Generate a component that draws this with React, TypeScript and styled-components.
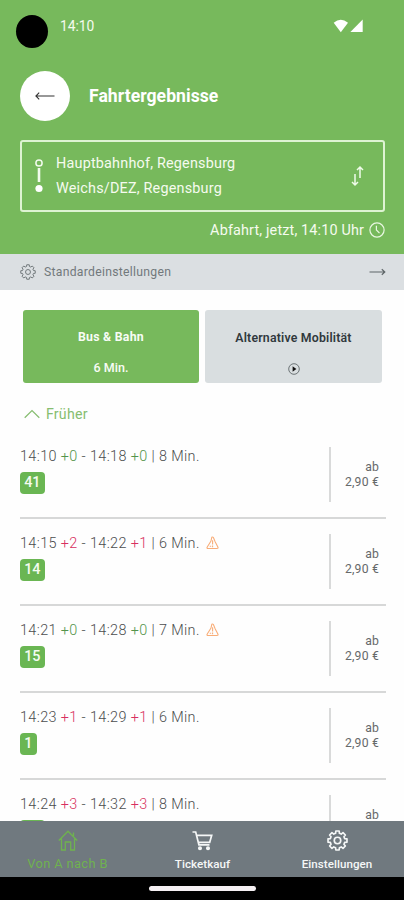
import React from 'react';
import styled, { createGlobalStyle } from 'styled-components';

const GREEN = '#77b95c';

const GlobalStyle = createGlobalStyle`
  * { box-sizing: border-box; }
  body { margin: 0; background: #fefefe; font-family: Roboto, "Liberation Sans", sans-serif; }
  svg { display: block; flex: none; }
`;

const Screen = styled.div`
  width: 404px;
  height: 900px;
  display: flex;
  flex-direction: column;
  overflow: hidden;
  background: #fefefe;
`;

const Header = styled.header`
  flex: none;
  height: 254px;
  padding: 15px 19px 0 20px;
  background: ${GREEN};
  color: #f5fbef;
`;

const StatusBar = styled.div`
  display: flex;
  height: 33px;
  margin-left: -4px;
  padding-right: 22px;
`;

const Camera = styled.div`
  width: 32px;
  height: 33px;
  border-radius: 50%;
  background: #000;
`;

const Clock = styled.span`
  flex: 1;
  margin: 2px 0 0 12px;
  font-size: 13.8px;
  line-height: 18px;
`;

const Signals = styled.div`
  display: flex;
  gap: 1px;
  padding-top: 4px;
`;

const TitleRow = styled.div`
  display: flex;
  align-items: center;
  gap: 19px;
  margin-top: 23px;
  height: 50px;
`;

const BackButton = styled.button`
  display: flex;
  align-items: center;
  justify-content: center;
  width: 50px;
  height: 50px;
  padding: 0;
  border: 0;
  border-radius: 50%;
  background: #fff;
`;

const Title = styled.h1`
  margin: 0;
  font-size: 17.6px;
  font-weight: 700;
  line-height: 24px;
  letter-spacing: 0.04px;
  color: #fff;
`;

const RouteBox = styled.div`
  display: flex;
  align-items: center;
  height: 72px;
  margin-top: 18.5px;
  padding: 0 19px 0 13px;
  border: 2px solid #def3d3;
  border-radius: 3px;
`;

const Stops = styled.div`
  flex: 1;
  margin: 1px 0 0 13px;
  font-size: 14.4px;
  line-height: 25.5px;
  letter-spacing: 0.2px;
`;

const Departure = styled.div`
  display: flex;
  justify-content: flex-end;
  align-items: center;
  gap: 5px;
  height: 20px;
  margin-top: 8.5px;
  font-size: 14.4px;
  letter-spacing: 0.15px;
`;

const SettingsBar = styled.div`
  flex: none;
  display: flex;
  align-items: center;
  height: 36px;
  padding: 0 18px 0 20px;
  background: #dbdfe2;
  color: #72797c;
`;

const SettingsLabel = styled.span`
  flex: 1;
  margin-left: 8px;
  font-size: 12.2px;
  letter-spacing: 0.28px;
`;

const Tabs = styled.div`
  flex: none;
  display: grid;
  grid-template-columns: 176px 177px;
  gap: 6px;
  margin: 20px 0 0 23px;
`;

const Tab = styled.button<{ $active?: boolean }>`
  display: flex;
  flex-direction: column;
  align-items: center;
  height: 73px;
  padding: ${p => (p.$active ? '19px' : '20px')} 0 0;
  border: 0;
  border-radius: 3px;
  background: ${p => (p.$active ? GREEN : '#d9dee0')};
  color: ${p => (p.$active ? '#f8fcf5' : '#30383c')};
  font: 400 12.5px/16px Roboto, sans-serif;
`;

const TabTitle = styled.span<{ $strong?: boolean }>`
  margin-bottom: ${p => (p.$strong ? '15px' : '17px')};
  font-weight: ${p => (p.$strong ? 700 : 600)};
  font-size: 12.3px;
  letter-spacing: ${p => (p.$strong ? '0.25px' : '0.2px')};
`;

const TabValue = styled.span`
  font-weight: 500;
  letter-spacing: 0;
`;

const Earlier = styled.button`
  flex: none;
  display: flex;
  align-items: center;
  gap: 6px;
  height: 20px;
  margin: 20.5px 0 0 24px;
  padding: 0;
  border: 0;
  background: none;
  color: #86bd70;
  font: 400 14.2px/20px Roboto, sans-serif;
  letter-spacing: 0.2px;
`;

const Results = styled.main`
  flex: 1;
  min-height: 0;
  overflow: hidden;
  margin: 8.5px 18px 0 20px;
`;

const Trip = styled.article`
  display: flex;
  height: 87px;
  padding: 15px 0 0;
  border-bottom: 2px solid #d7d8d8;
`;

const TripInfo = styled.div`
  flex: 1;
`;

const Times = styled.div`
  display: flex;
  align-items: center;
  height: 18px;
  color: #4b4d4e;
  font-size: 14.4px;
  font-weight: 300;
  letter-spacing: 0.38px;
  white-space: pre;
  svg { margin-left: 6px; }
`;

const Delay = styled.span<{ $late: boolean }>`
  color: ${p => (p.$late ? '#d82f60' : '#53944b')};
`;

const Line = styled.span`
  display: inline-block;
  height: 22px;
  margin-top: 7px;
  padding: 0 4.2px;
  border-radius: 4px;
  background: #6ab653;
  color: #f5fcf1;
  font-size: 14.4px;
  font-weight: 500;
  line-height: 22px;
`;

const Fare = styled.div`
  width: 57px;
  height: 55px;
  padding: 13px 7px 0 0;
  border-left: 2px solid #d9dada;
  color: #66696a;
  font-size: 12.2px;
  line-height: 15px;
  letter-spacing: 0.2px;
  text-align: right;
`;

const BottomNav = styled.nav`
  flex: none;
  display: grid;
  grid-template-columns: 135px 135px 134px;
  height: 56px;
  background: #70797f;
`;

const NavItem = styled.a<{ $active?: boolean }>`
  display: flex;
  flex-direction: column;
  align-items: center;
  padding-top: 9px;
  color: ${p => (p.$active ? '#6fb24f' : '#f5f7f7')};
  font-size: ${p => (p.$active ? '12.8px' : '11.6px')};
  font-weight: ${p => (p.$active ? 400 : 500)};
  letter-spacing: ${p => (p.$active ? '0.4px' : '0.04px')};
  line-height: 16px;
  svg { margin-bottom: 5px; }
`;

const GestureArea = styled.div`
  flex: none;
  display: flex;
  justify-content: center;
  height: 23px;
  padding-top: 9px;
  background: #000;
`;

const GestureHandle = styled.div`
  width: 107px;
  height: 5px;
  border-radius: 3px;
  background: #f5f0f3;
`;

const Gear = ({ size, stroke }: { size: number; stroke: number }) => {
  const points: string[] = [];
  for (let i = 0; i < 8; i++) {
    const at = (deg: number, r: number) => {
      const a = ((i * 45 + deg) * Math.PI) / 180;
      return `${(12 + r * Math.sin(a)).toFixed(2)},${(12 - r * Math.cos(a)).toFixed(2)}`;
    };
    points.push(at(-15, 8.5), at(-10, 11), at(10, 11), at(15, 8.5));
  }
  return (
    <svg width={size} height={size} viewBox="0 0 24 24" fill="none" stroke="currentColor" strokeWidth={stroke} strokeLinejoin="round">
      <polygon points={points.join(' ')} />
      <circle cx="12" cy="12" r="3.7" />
    </svg>
  );
};

const Warning = () => (
  <svg width="13" height="14" viewBox="0 0 13 14" fill="none" stroke="#f8ad78" strokeWidth="1.1" strokeLinejoin="round">
    <path d="M5.8 1.3Q6.7.6 7.4 1.5L9 5.4 12 11.3Q12.3 12.5 11 12.5H2Q.6 12.5 1.1 11.3L5 5Z" />
    <path d="M6.6 4.2v4.2M3.7 10.3h1.5M6.6 9.6v1.6" />
  </svg>
);

type TripData = { dep: string; depDelay: number; arr: string; arrDelay: number; min: number; line: string; warn?: boolean };

const trips: TripData[] = [
  { dep: '14:10', depDelay: 0, arr: '14:18', arrDelay: 0, min: 8, line: '41' },
  { dep: '14:15', depDelay: 2, arr: '14:22', arrDelay: 1, min: 6, line: '14', warn: true },
  { dep: '14:21', depDelay: 0, arr: '14:28', arrDelay: 0, min: 7, line: '15', warn: true },
  { dep: '14:23', depDelay: 1, arr: '14:29', arrDelay: 1, min: 6, line: '1' },
  { dep: '14:24', depDelay: 3, arr: '14:32', arrDelay: 3, min: 8, line: '41' },
];

export default function App() {
  return (
    <>
      <GlobalStyle />
      <Screen>
        <Header>
          <StatusBar>
            <Camera />
            <Clock>14:10</Clock>
            <Signals>
              <svg width="16" height="14" viewBox="0 0 16 14" fill="#fff"><path d="M.7 3.8Q7.8-2.2 15 3.8L7.8 13.2Z" /></svg>
              <svg width="13" height="14" viewBox="0 0 13 14" fill="#fff"><path d="M12.7.6V13H.4Z" /></svg>
            </Signals>
          </StatusBar>
          <TitleRow>
            <BackButton aria-label="Zurück">
              <svg width="20" height="10" viewBox="0 0 20 10" fill="none" stroke="#333" strokeWidth="1.1"><path d="M19.5 5H1M4.2 1.7L.9 5l3.3 3.3" /></svg>
            </BackButton>
            <Title>Fahrtergebnisse</Title>
          </TitleRow>
          <RouteBox>
            <svg width="8" height="36" viewBox="0 0 8 36" fill="none" stroke="#f2fbed">
              <circle cx="4" cy="5" r="3.1" strokeWidth="1.5" />
              <path d="M4 10v14" strokeWidth="2.6" />
              <circle cx="4" cy="30.5" r="3.6" fill="#fff" stroke="none" />
            </svg>
            <Stops>
              <div>Hauptbahnhof, Regensburg</div>
              <div>Weichs/DEZ, Regensburg</div>
            </Stops>
            <svg width="13" height="22" viewBox="0 0 13 22" fill="none" stroke="#effbe9" strokeWidth="1.5">
              <path d="M4 9v11M1 17l3 3 3-3M9 13V2M6 5l3-3 3 3" />
            </svg>
          </RouteBox>
          <Departure>
            <span>Abfahrt, jetzt, 14:10 Uhr</span>
            <svg width="16" height="16" viewBox="0 0 16 16" fill="none" stroke="#e9f7e2" strokeWidth="1.2">
              <circle cx="8" cy="8" r="7.1" /><path d="M7.4 3.7V8l3.1 3.2" />
            </svg>
          </Departure>
        </Header>
        <SettingsBar>
          <Gear size={16} stroke={1.5} />
          <SettingsLabel>Standardeinstellungen</SettingsLabel>
          <svg width="17" height="8" viewBox="0 0 17 8" fill="none" stroke="#5f6669" strokeWidth="1.2"><path d="M.5 4h15M12.8 1.2L15.8 4l-3 2.8" /></svg>
        </SettingsBar>
        <Tabs>
          <Tab $active>
            <TabTitle $strong>Bus &amp; Bahn</TabTitle>
            <TabValue>6 Min.</TabValue>
          </Tab>
          <Tab>
            <TabTitle>Alternative Mobilität</TabTitle>
            <svg width="12" height="12" viewBox="0 0 12 12" fill="none" stroke="#51595c" strokeWidth=".8">
              <circle cx="6" cy="6" r="5.3" /><path d="M4.6 3.2L8.4 6 4.6 8.8Z" fill="#111" stroke="none" />
            </svg>
          </Tab>
        </Tabs>
        <Earlier>
          <svg width="16" height="10" viewBox="0 0 16 10" fill="none" stroke="currentColor" strokeWidth="1.2"><path d="M.7 8.7L8 1.5l7.3 7.2" /></svg>
          Früher
        </Earlier>
        <Results>
          {trips.map(t => (
            <Trip key={t.dep}>
              <TripInfo>
                <Times>
                  <span>{t.dep} <Delay $late={t.depDelay > 0}>+{t.depDelay}</Delay> - {t.arr} <Delay $late={t.arrDelay > 0}>+{t.arrDelay}</Delay> | {t.min} Min.</span>
                  {t.warn && <Warning />}
                </Times>
                <Line>{t.line}</Line>
              </TripInfo>
              <Fare>ab<br />2,90 €</Fare>
            </Trip>
          ))}
        </Results>
        <BottomNav>
          <NavItem $active>
            <svg width="20" height="21" viewBox="0 0 20 21" fill="none" stroke="currentColor" strokeWidth="1.3">
              <path d="M.8 10.5L10 1.2l9.2 9.3M3.5 8.5V20h3.8v-8h5.4v8h3.8V8.5M15.5 6V2.5" />
            </svg>
            Von A nach B
          </NavItem>
          <NavItem>
            <svg width="21" height="21" viewBox="0 0 21 21" fill="none" stroke="currentColor" strokeWidth="1.7">
              <path d="M.5 2h3.2l3.2 12.8h10.6M4.7 5.3h15l-2 7H6.5" />
              <circle cx="8" cy="18.3" r="1.2" fill="currentColor" /><circle cx="16" cy="18.3" r="1.2" fill="currentColor" />
            </svg>
            Ticketkauf
          </NavItem>
          <NavItem>
            <Gear size={21} stroke={1.9} />
            Einstellungen
          </NavItem>
        </BottomNav>
        <GestureArea><GestureHandle /></GestureArea>
      </Screen>
    </>
  );
}
